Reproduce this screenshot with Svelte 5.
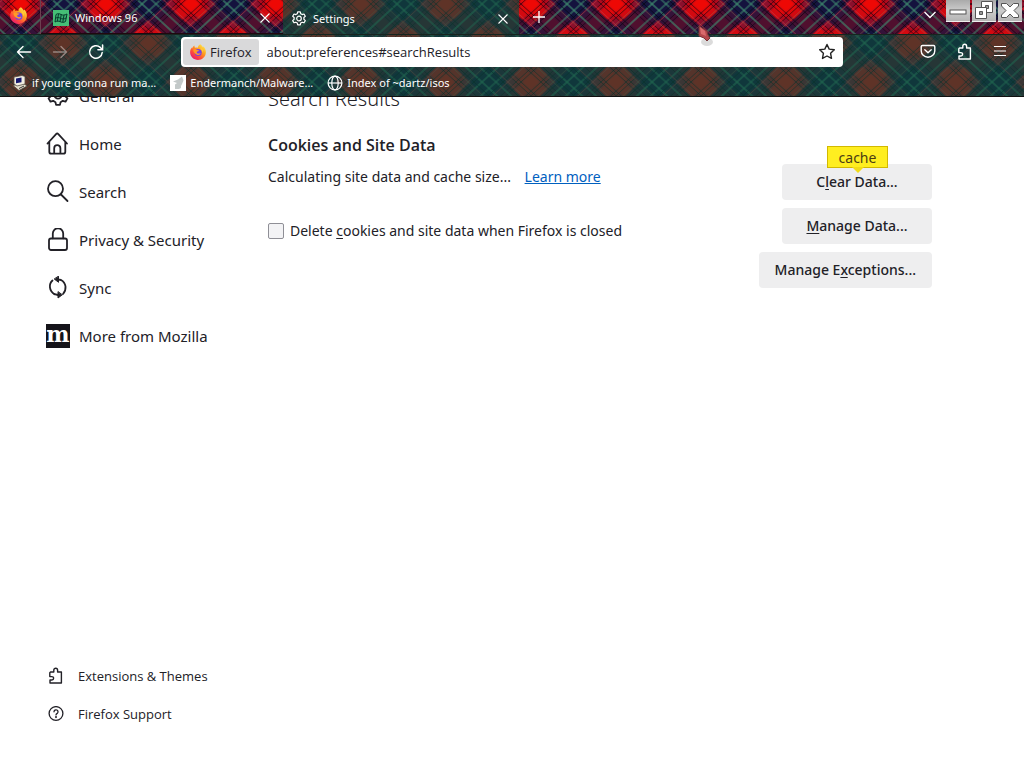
<script>
  const shift = [-1, 0, 1, 2];
  const bands = [
    { at: 0, w: 20, color: '#f00000', o: 0.35 },
    { at: 0, w: 10, color: '#ff0800', o: 0.45 },
    { at: 42, w: 24, color: '#001440', o: 0.62 },
    { at: 10, w: 1, color: '#100008', o: 0.6 },
    { at: 15, w: 1, color: '#100008', o: 0.6 },
    { at: 70, w: 1, color: '#100008', o: 0.6 },
    { at: 75, w: 1, color: '#100008', o: 0.6 },
    { at: 36, w: 2, color: '#3f9070', o: 0.6 },
    { at: 50, w: 2, color: '#3f9070', o: 0.5 },
    { at: 28, w: 1, color: '#04060f', o: 0.7 },
    { at: 57, w: 1, color: '#04060f', o: 0.7 },
    { at: 62, w: 1, color: '#c04048', o: 0.6 },
    { at: 22, w: 1, color: '#8a7a55', o: 0.4 }
  ];
  const nav = [
    { icon: 'gear', label: 'General' },
    { icon: 'home', label: 'Home' },
    { icon: 'search', label: 'Search' },
    { icon: 'lock', label: 'Privacy & Security' },
    { icon: 'sync', label: 'Sync' },
    { icon: 'mozilla', label: 'More from Mozilla' }
  ];
  let address = $state('about:preferences#searchResults');
  let deleteOnClose = $state(false);
</script>

{#snippet firefox(size)}
  <svg width={size} height={size} viewBox="0 0 16 16" aria-hidden="true">
    <defs>
      <linearGradient id="flame" x1="0.85" y1="0.1" x2="0.2" y2="0.9">
        <stop offset="0" stop-color="#ffe34a" /><stop offset=".35" stop-color="#ffa01f" />
        <stop offset=".7" stop-color="#ff4f38" /><stop offset="1" stop-color="#e8206a" />
      </linearGradient>
    </defs>
    <path d="M10.2.2c1.4 1 2.200 2.100 2.700 3.100.4-.2.4-.7.3-1.100C15 3.800 16 6.100 15.900 8.500 15.700 12.700 12.300 16 8 16S.1 12.600.1 8.300C.1 6.300.9 4.600 1.900 3.500l.3 1.100C2.500 3.400 3.400 2.300 4.500 1.600c-.1.900.1 1.700.5 2.200 1-.4 2-.3 2.900 0C7.800 2.300 8.800.9 10.200.2z" fill="url(#flame)" />
    <circle cx="8.200" cy="8.600" r="3.500" fill="#7542e5" />
    <path d="M3.300 5.600c1.200-.8 2.800-.5 3.700.3l2 .3c0 .9-1.300 1.200-2 1.400-.5.500-.3 1.500.6 1.800 1.100.4 1.900-.5 3.100-.1-.6 1.500-2.200 2-3.700 1.400-2.500-.9-3.900-2.800-3.700-5.100z" fill="#ff9a27" />
    <path d="M10.300 4.300c1.500 1.300 2.200 2.800 2.100 4.600 1.300-2.200.3-4.700-2.100-4.600z" fill="#ffd43a" />
  </svg>
{/snippet}

{#snippet gear(size, w)}
  <svg width={size} height={size} viewBox="0 0 16 16" fill="none" stroke="currentColor" stroke-width={w} stroke-linejoin="round" aria-hidden="true">
    <path d="M6.300 2.700 6.700.9h2.600l.4 1.800 1.500.9 1.800-.6 1.300 2.200-1.400 1.300v1.800l1.400 1.300-1.300 2.200-1.800-.6-1.500.9-.4 1.800H6.700l-.4-1.800-1.500-.9-1.800.6-1.300-2.200 1.400-1.300V6.500L1.700 5.200 3 3l1.800.6z" />
    <circle cx="8" cy="7.500" r="2.300" />
  </svg>
{/snippet}

{#snippet puzzle()}
  <svg width="16" height="18" viewBox="0 0 16 18" fill="none" stroke="currentColor" stroke-width="1.400" stroke-linejoin="round" aria-hidden="true">
    <path d="M2.500 5h3.300V3.200a1.900 1.900 0 0 1 3.800 0V5h3.800v11H2v-3h1.900a1.700 1.700 0 0 0 0-3.400H1.800V5.700z" />
  </svg>
{/snippet}

{#snippet cross()}
  <svg width="12" height="12" viewBox="0 0 12 12" fill="none" stroke="currentColor" stroke-width="1.100" aria-hidden="true"><path d="m1.500 1.500 9 9m0-9-9 9" /></svg>
{/snippet}

<div class="browser">
  <header>
    <svg class="tartan" aria-hidden="true">
      <defs>
        <pattern id="plaid" x="21" y="4" width="85" height="78" patternUnits="userSpaceOnUse">
          <rect width="85" height="78" fill="#8c0f2c" />
          {#each bands as b}
            <g stroke={b.color} stroke-width={b.w} stroke-opacity={b.o} stroke-linecap="square">
              {#each shift as k}
                <path d={`M${b.at + 85 * k} 0l-85 78`} />
                <path d={`M${b.at + 85 * (k - 1)} 0l85 78`} />
              {/each}
            </g>
          {/each}
        </pattern>
      </defs>
      <rect width="100%" height="100%" fill="url(#plaid)" />
    </svg>

    <div class="tabs">
      <button class="home-tab" aria-label="Firefox View">{@render firefox(17)}</button>
      <div class="tab">
        <button class="pick">
          <svg width="16" height="16" viewBox="0 0 16 16" aria-hidden="true">
            <rect width="16" height="16" fill="#45bf76" />
            <path d="M3 4.500c2-1.500 3.500-.8 5 0s3.500.8 6-.5l-1.500 7.500c-1.800 1.200-3.700 1-5.200.2s-3.500-.9-5.300.3z" fill="#3aae70" stroke="#063d2c" stroke-width="1" />
            <path d="M8.300 4 7 12M2.500 8.300c2-1.200 3.300-.9 5 0s3.500.9 5.600-.3M11 5l-1.200 7M5.500 4 4.300 11.500" stroke="#063d2c" fill="none" />
          </svg>
          <span>Windows 96</span>
        </button>
        <button class="close" aria-label="Close Windows 96">{@render cross()}</button>
      </div>
      <div class="tab active">
        <button class="pick">{@render gear(16, 1.2)}<span>Settings</span></button>
        <button class="close" aria-label="Close Settings">{@render cross()}</button>
      </div>
      <button class="new" aria-label="New tab">
        <svg width="14" height="14" viewBox="0 0 14 14" stroke="currentColor" stroke-width="1.300"><path d="M7 1v12M1 7h12" /></svg>
      </button>
      <span class="grow"></span>
      <button class="list" aria-label="List all tabs">
        <svg width="14" height="10" viewBox="0 0 14 10" fill="none" stroke="currentColor" stroke-width="1.300"><path d="m1.500 2 5.500 5.500L12.500 2" /></svg>
      </button>
      <div class="window">
        <button aria-label="Minimize"><svg width="24" height="22" viewBox="0 0 24 22"><rect x="4" y="10" width="16" height="4" fill="#fff" stroke="#555" /></svg></button>
        <button aria-label="Restore">
          <svg width="24" height="22" viewBox="0 0 24 22" stroke="#555">
            <path d="M9.500 1.500h11v11h-11z" fill="#fff" /><path d="M13.500 5.500h3v3h-3z" fill="#999" />
            <path d="M3.500 7.500h11v11h-11z" fill="#fff" /><path d="M7.500 11.500h3v3h-3z" fill="#999" />
          </svg>
        </button>
        <button aria-label="Close"><svg width="24" height="22" viewBox="0 0 24 22"><path d="M3.500 3.500h5l3.500 3.500 3.500-3.500h5V6L16 10.500l4.500 4.500v2.500h-5L12 14l-3.500 3.500h-5V15L8 10.500 3.500 6z" fill="#fff" stroke="#555" /></svg></button>
      </div>
    </div>

    <div class="toolbar">
      <div class="arrows">
        <button aria-label="Back"><svg width="16" height="16" viewBox="0 0 16 16" fill="none" stroke="currentColor" stroke-width="1.400" stroke-linecap="round" stroke-linejoin="round"><path d="M14.500 8H1.500M7 2.500 1.500 8 7 13.500" /></svg></button>
        <button class="off" aria-label="Forward" disabled><svg width="16" height="16" viewBox="0 0 16 16" fill="none" stroke="currentColor" stroke-width="1.400" stroke-linecap="round" stroke-linejoin="round"><path d="M1.500 8h13M9 2.500 14.500 8 9 13.500" /></svg></button>
        <button aria-label="Reload"><svg width="16" height="16" viewBox="0 0 16 16" fill="none" stroke="currentColor" stroke-width="1.500" stroke-linecap="round"><path d="M14.200 8.500a6.300 6.300 0 1 1-2-5.100L14 5.200" /><path d="M14.600 1v4.700H9.900" /></svg></button>
      </div>
      <div class="urlbar">
        <button class="identity">{@render firefox(16)}<span>Firefox</span></button>
        <input aria-label="Address" bind:value={address} />
        <button class="star" aria-label="Bookmark this page"><svg width="18" height="18" viewBox="0 0 18 18" fill="none" stroke="#222" stroke-width="1.400" stroke-linejoin="round"><path d="m9 1.500 2.200 4.600 5.100.7-3.700 3.500.9 5.100L9 13l-4.500 2.400.9-5.100L1.700 6.800l5.100-.7z" /></svg></button>
      </div>
      <div class="tools">
        <button aria-label="Save to Pocket"><svg width="16" height="16" viewBox="0 0 16 16" fill="none" stroke="currentColor" stroke-width="1.400" stroke-linecap="round" stroke-linejoin="round"><path d="M2.500 1.500h11c.8 0 1.300.5 1.300 1.300v3.900a6.800 6.500 0 0 1-13.600 0V2.800c0-.8.5-1.300 1.300-1.300z" /><path d="m4.800 5.700 3.200 3 3.200-3" /></svg></button>
        <button aria-label="Extensions">{@render puzzle()}</button>
        <button aria-label="Open menu"><svg width="14" height="14" viewBox="0 0 14 14" stroke="currentColor" stroke-width="1.200"><path d="M1 1.500h12M1 6h12M1 10.500h12" /></svg></button>
      </div>
    </div>

    <nav class="bookmarks" aria-label="Bookmarks">
      <a href="#malware">
        <svg width="16" height="16" viewBox="0 0 16 16" aria-hidden="true"><path d="M1 10.500 11 8l4 3-8 4.500z" fill="#e6dfce" stroke="#554c44" stroke-width=".8" /><path d="m2 2 8-1.500 3 1v7.500L5 11 2 9z" fill="#f2eee2" stroke="#554c44" stroke-width=".8" /><path d="m4 3.500 5.500-1v4.700L4 8.200z" fill="#17196f" /><path d="m7 13.500 5-2.500" stroke="#333" /></svg>
        if youre gonna run ma...
      </a>
      <a href="#endermanch">
        <svg width="16" height="16" viewBox="0 0 16 16" aria-hidden="true"><rect width="16" height="16" fill="#fff" /><path d="M5 14V9.500L7 8 3 6.500l5-2L12 1.500l1.500 4L12 9l-1 2v2l-2 1z" fill="#c3c9c9" /></svg>
        Endermanch/Malware...
      </a>
      <a href="#isos">
        <svg width="16" height="16" viewBox="0 0 16 16" fill="none" stroke="currentColor" stroke-width="1.200" aria-hidden="true"><circle cx="8" cy="8" r="6.900" /><ellipse cx="8" cy="8" rx="3.200" ry="6.900" /><path d="M1.100 8h13.800" /></svg>
        Index of ~dartz/isos
      </a>
    </nav>
    <svg class="pointer" width="18" height="24" viewBox="0 0 18 24" aria-hidden="true">
      <ellipse cx="10" cy="18" rx="6" ry="4" fill="#000" opacity=".14" />
      <path d="m2 2 8 5 1 4 2 3-3 3-3-3-5-2z" fill="#b5484c" stroke="#7b3438" />
      <path d="m3 3 5 4 1 5-5-2z" fill="#d96a6c" />
    </svg>
  </header>

  <div class="page">
    <aside>
      <nav class="categories" aria-label="Settings categories">
        {#each nav as item}
          <a href={'#' + item.icon}>
            <span class="icon">
              {#if item.icon === 'gear'}{@render gear(24, 1.2)}
              {:else if item.icon === 'mozilla'}<span class="moz" aria-hidden="true">m</span>
              {:else}
                <svg width="24" height="24" viewBox="0 0 24 24" fill="none" stroke="currentColor" stroke-width="1.800" stroke-linecap="round" stroke-linejoin="round" aria-hidden="true">
                  {#if item.icon === 'home'}
                    <path d="M1.500 11.500 10.300 1.900a1.200 1.200 0 0 1 1.800 0L21 11.500M3.300 10v9.700c0 1.300.7 2 2 2h12c1.300 0 2-.7 2-2V10M8.200 21.500v-5.300a3.100 3.100 0 0 1 6.200 0v5.300" />
                  {:else if item.icon === 'search'}
                    <circle cx="9.500" cy="8.700" r="7.500" /><path d="m15 14.500 6.500 6.500" />
                  {:else if item.icon === 'lock'}
                    <rect x="3" y="10.500" width="18" height="11.500" rx="2" /><path d="M6.800 10.300V5.500a5.200 5.200 0 0 1 10.400 0v4.800" />
                  {:else}
                    <path d="M6.500 4.500C2.500 8 3 15 8.500 18.200M17 18c4-4.500 3.300-11-2-14L11.500 3.300" />
                    <path d="M12.500.5v5.800L8.500 3.200zM12 16v6l4-3z" fill="currentColor" stroke-width="1" /><path d="m8.500 18.200 3.500.8" />
                  {/if}
                </svg>
              {/if}
            </span>
            {item.label}
          </a>
        {/each}
      </nav>
      <nav class="support" aria-label="Help">
        <a href="#addons"><span class="icon">{@render puzzle()}</span>Extensions &amp; Themes</a>
        <a href="#help"><span class="icon"><svg width="16" height="16" viewBox="0 0 16 16" fill="none" stroke="currentColor" stroke-width="1.300" stroke-linecap="round" aria-hidden="true"><circle cx="8" cy="7.500" r="6.900" /><path d="M6 5.800a2 2 0 1 1 3.200 1.600C8.400 7.900 8 8.200 8 8.900" /><circle cx="8" cy="11.100" r=".4" /></svg></span>Firefox Support</a>
      </nav>
    </aside>

    <main>
      <h1>Search Results</h1>
      <section>
        <div class="copy">
          <h2>Cookies and Site Data</h2>
          <p>Calculating site data and cache size... <a href="#learn">Learn more</a></p>
          <label><input type="checkbox" bind:checked={deleteOnClose} /><span>Delete <u>c</u>ookies and site data when Firefox is closed</span></label>
        </div>
        <div class="actions">
          <button>C<u>l</u>ear Data...<span class="tip">cache</span></button>
          <button><u>M</u>anage Data...</button>
          <button>Manage E<u>x</u>ceptions...</button>
        </div>
      </section>
    </main>
  </div>
</div>

<style>
  :global(body) { background: #fff; }
  * { box-sizing: border-box; }
  .browser { font: 14px/20px "Noto Sans", "Open Sans", sans-serif; color: #222127; min-height: 100vh; display: flex; flex-direction: column; }
  button { font: inherit; color: inherit; border: 0; padding: 0; background: none; }
  a { color: inherit; text-decoration: none; }
  svg { display: block; flex: none; }
  u { text-underline-offset: 2px; }

  header { position: relative; z-index: 1; color: #fff; font-size: 11px; line-height: 16px; border-bottom: 1px solid #111; }
  .tartan { position: absolute; inset: 0; width: 100%; height: 100%; }
  .tabs, .toolbar, .bookmarks { position: relative; display: flex; align-items: center; }
  .tabs { height: 34px; }
  .tab.active, .toolbar, .bookmarks { background: rgba(14, 76, 60, 0.64); }
  .home-tab { width: 41px; height: 34px; padding: 0 0 4px 10px; border-right: 1px solid #6b4050; }
  .tab { display: flex; align-items: center; width: 242px; height: 34px; padding: 3px 12px 0; border-bottom: 1px solid #200810; }
  .tab.active { width: 236px; padding: 3px 10px 0 8px; border: 0; }
  .pick { flex: 1; display: flex; align-items: center; gap: 6px; text-align: left; }
  .new { padding: 0 13px; }
  .grow { flex: 1; }
  .list { padding: 0 9px 4px 0; }
  .window { display: flex; gap: 2px; align-self: flex-start; margin-right: 2px; }
  .window button { height: 22px; background: linear-gradient(#aaa, #ccc 50%, #b5b5b5); border-bottom: 1px solid #eee; }

  .toolbar { height: 35px; border-top: 1px solid #17251f; }
  .arrows { display: flex; gap: 20px; padding-left: 16px; width: 181px; }
  .off { opacity: 0.4; }
  .urlbar { flex: 1; height: 30px; display: flex; align-items: center; background: #fff; border-radius: 4px; color: #222127; padding: 2px 7px 2px 2px; font-family: "Open Sans", sans-serif; font-size: 13px; }
  .identity { height: 26px; display: flex; align-items: center; gap: 4px; background: #d9d9da; border-radius: 3px; padding: 0 7px; }
  .urlbar input { flex: 1; min-width: 0; border: 0; outline: 0; background: none; font: inherit; color: inherit; padding: 0 8px; }
  .tools { display: flex; align-items: center; justify-content: space-between; width: 181px; padding: 0 17px 0 77px; }
  .bookmarks { height: 27px; gap: 14px; padding: 0 12px; }
  .bookmarks a { display: flex; align-items: center; gap: 4px; white-space: nowrap; }
  .pointer { position: absolute; left: 697px; top: 24px; }

  .page { flex: 1; display: flex; overflow: hidden; }
  aside { flex: none; width: 268px; padding: 0 0 35px 46px; display: flex; flex-direction: column; justify-content: space-between; }
  .categories { margin-top: -25px; font-size: 15px; }
  .categories a { height: 48px; display: flex; align-items: center; gap: 9px; }
  .icon { flex: none; width: 24px; display: flex; justify-content: flex-start; }
  .moz { width: 24px; height: 24px; background: #15141a; color: #fff; font: bold 22px/20px "DejaVu Serif", serif; display: flex; justify-content: center; }
  .support { font-family: "Open Sans", sans-serif; font-size: 13px; }
  .support a { height: 38px; display: flex; align-items: center; gap: 8px; }
  .support .icon { padding-left: 2px; }

  main { flex: 1; max-width: 664px; }
  h1 { font-size: 20px; line-height: 28px; font-weight: 300; margin: -12px 0 0; }
  section { display: flex; justify-content: space-between; padding-top: 20px; }
  h2 { font-size: 16px; line-height: 24px; font-weight: 600; margin: 0 0 10px; font-family: "Open Sans", sans-serif; }
  p { margin: 0; }
  p a { color: #0060bf; text-decoration: underline; margin-left: 10px; }
  label { display: flex; align-items: center; gap: 6px; margin-top: 34px; }
  input[type="checkbox"] { appearance: none; width: 16px; height: 16px; margin: 0; background: #f3f3f5; border: 1px solid #8f8f96; border-radius: 2px; }
  input[type="checkbox"]:checked { background: #0060df; }
  .actions { display: flex; flex-direction: column; align-items: flex-end; gap: 8px; padding-top: 31px; }
  .actions button { position: relative; min-width: 150px; height: 36px; padding: 0 16px; border-radius: 4px; background: #eeeeef; font-weight: 500; }
  .tip { position: absolute; left: 45px; top: -18px; width: 61px; height: 22px; line-height: 22px; background: #ffee20; border: 1px solid #d2b900; font-weight: 400; color: #4b3d14; }
  .tip::after { content: ""; position: absolute; left: 24px; top: 20px; border: 6px solid transparent; border-top-color: #f2dc18; border-bottom: 0; }
</style>
